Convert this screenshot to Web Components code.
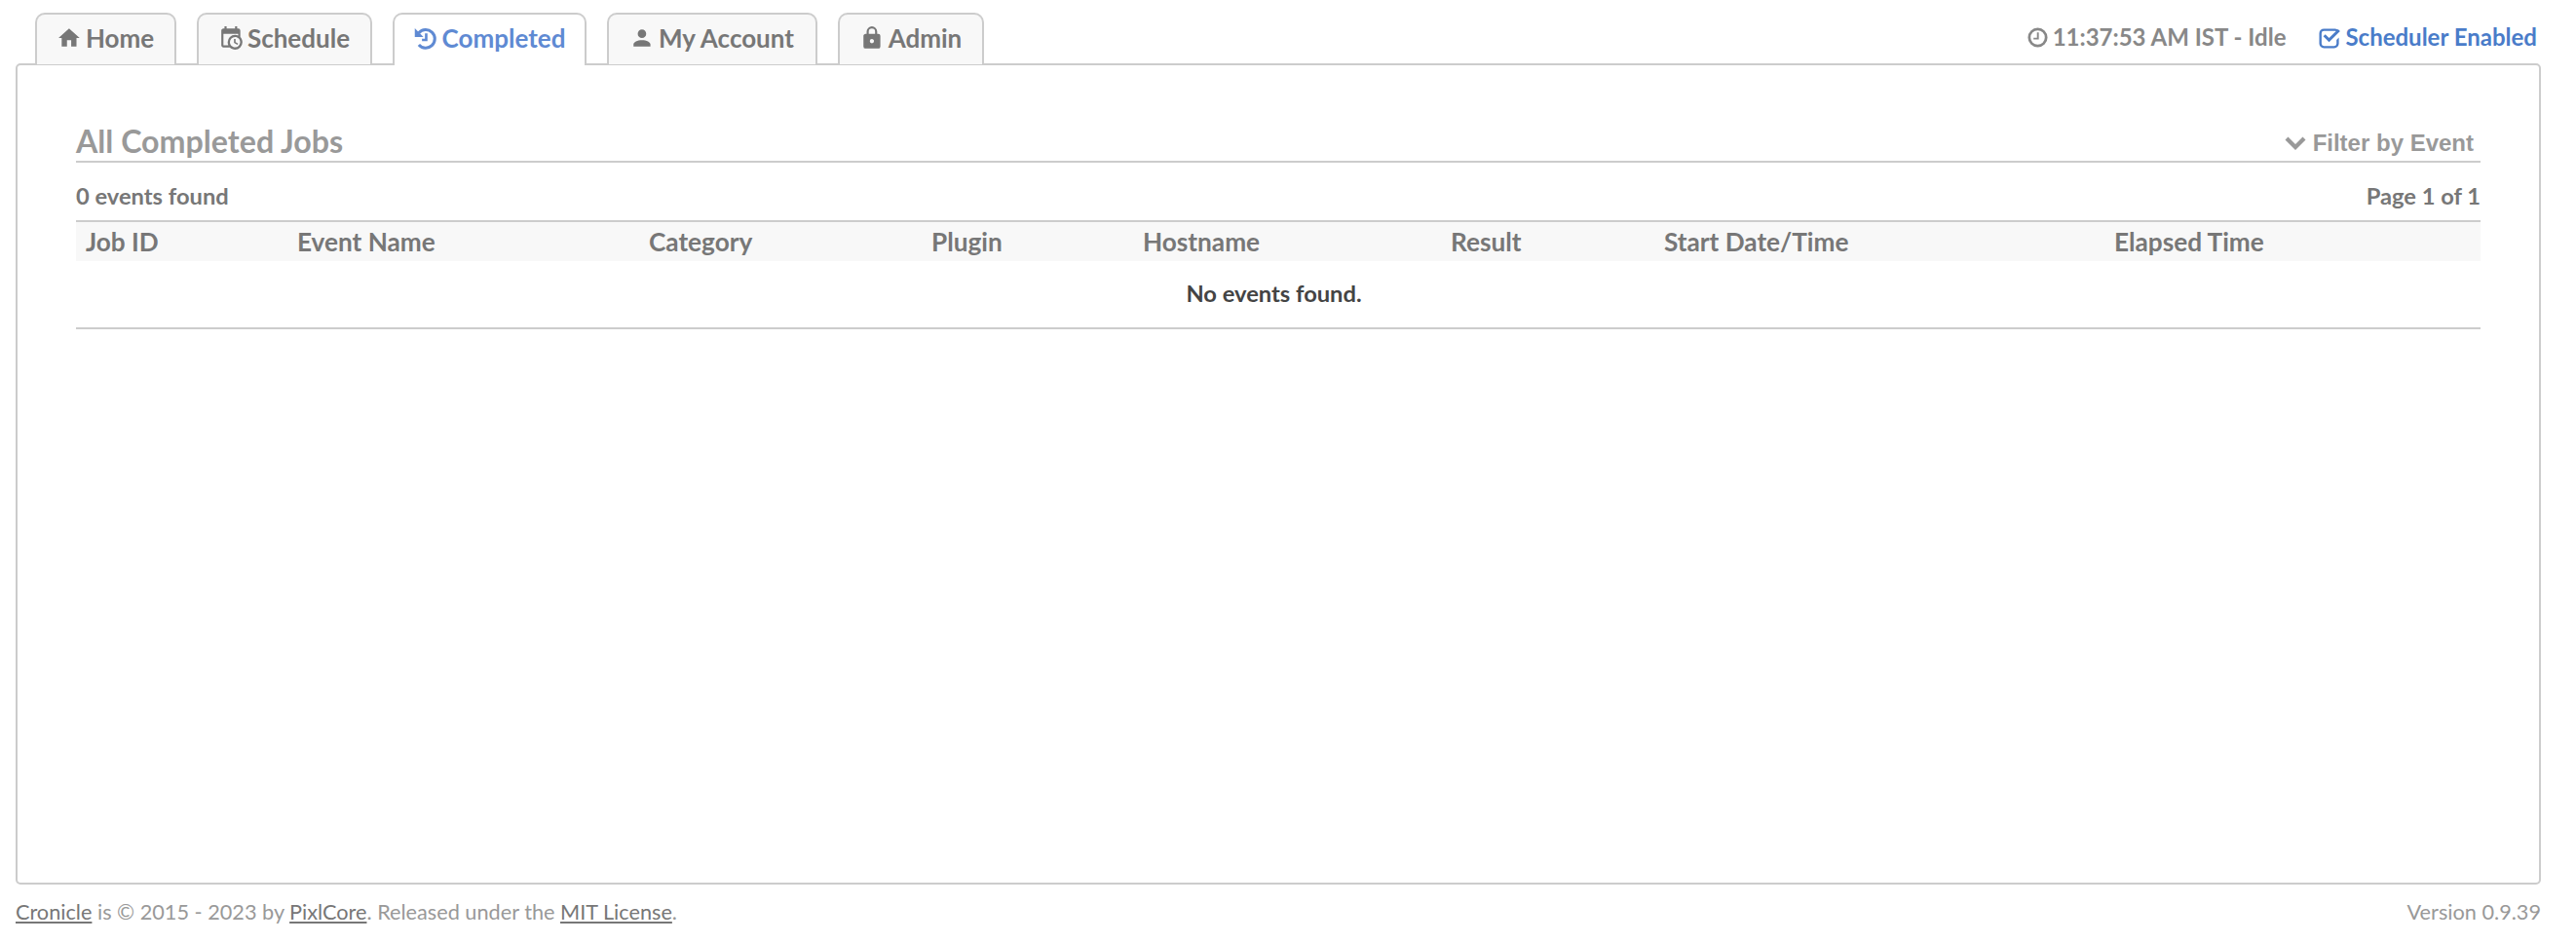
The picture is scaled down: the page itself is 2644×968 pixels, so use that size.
<!DOCTYPE html>
<html><head><meta charset="utf-8"><style>
html,body{margin:0;padding:0;background:#fff}
body{font-family:Lato,"Liberation Sans",sans-serif}
</style></head><body>
<app-shell>
  <tab-bar slot="tabs">
    <nav-tab icon="home" style="--w:145px">Home</nav-tab>
    <nav-tab icon="cal" style="--w:180px">Schedule</nav-tab>
    <nav-tab icon="hist" active style="--w:199px">Completed</nav-tab>
    <nav-tab icon="user" style="--w:216px">My Account</nav-tab>
    <nav-tab icon="lock" style="--w:150px">Admin</nav-tab>
    <status-bar></status-bar>
  </tab-bar>
  <jobs-panel></jobs-panel>
  <app-footer></app-footer>
</app-shell>
<script>
const ICONS={
home:'<svg viewBox="1 0 24 24"><path d="M10,20V14H14V20H19V12H22L12,3L2,12H5V20H10Z"/></svg>',
cal:'<svg viewBox="1 0 24 24"><path d="M15,13H16.5V15.82L18.94,17.23L18.19,18.53L15,16.69V13M19,8H5V19H9.67C9.24,18.09 9,17.07 9,16A7,7 0 0,1 16,9C17.07,9 18.09,9.24 19,9.67V8M5,21C3.89,21 3,20.1 3,19V5C3,3.89 3.89,3 5,3H6V1H8V3H16V1H18V3H19A2,2 0 0,1 21,5V11.1C22.24,12.36 23,14.09 23,16A7,7 0 0,1 16,23C14.09,23 12.36,22.24 11.1,21H5M16,11.15A4.85,4.85 0 0,0 11.15,16C11.15,18.68 13.32,20.85 16,20.85A4.85,4.85 0 0,0 20.85,16C20.85,13.32 18.68,11.15 16,11.15Z"/></svg>',
hist:'<svg viewBox="1.5 0 24 24"><path style="fill:none;stroke:currentColor;stroke-width:2.8" d="M6,7.2A8.6,8.6 0 1,1 6,18.4"/><path style="fill:none;stroke:currentColor;stroke-width:2.4" d="M13,7.5V13.8H9"/><path d="M2.2,2.8V11H10.4Z"/></svg>',
user:'<svg viewBox="1 0 24 24"><path d="M12,4A4,4 0 0,1 16,8A4,4 0 0,1 12,12A4,4 0 0,1 8,8A4,4 0 0,1 12,4M12,14C16.42,14 20,15.79 20,18V20H4V18C4,15.79 7.58,14 12,14Z"/></svg>',
lock:'<svg viewBox="1 0 24 24"><path d="M12,17A2,2 0 0,0 14,15C14,13.89 13.1,13 12,13A2,2 0 0,0 10,15A2,2 0 0,0 12,17M18,8A2,2 0 0,1 20,10V20A2,2 0 0,1 18,22H6A2,2 0 0,1 4,20V10C4,8.89 4.9,8 6,8H7V6A5,5 0 0,1 12,1A5,5 0 0,1 17,6V8H18M12,3A3,3 0 0,0 9,6V8H15V6A3,3 0 0,0 12,3Z"/></svg>',
clock:'<svg viewBox="0 0 24 24"><path d="M12,1.5A10.5,10.5 0 1,0 22.5,12A10.5,10.5 0 0,0 12,1.5M12,19.6A7.6,7.6 0 1,1 19.6,12A7.6,7.6 0 0,1 12,19.6M13.2,6.5H11.2V12.2H7.5V14.2H13.2Z"/></svg>',
check:'<svg viewBox="0 0 24 24"><path d="M5.5,2.5H17.5A3.5,3.5 0 0,1 20.8,4.8L18.9,6.7C18.8,5.6 18.2,5 17.5,5H5.5A2.5,2.5 0 0,0 3,7.5V18.5A2.5,2.5 0 0,0 5.5,21H16.5A2.5,2.5 0 0,0 19,18.5V14.5L21.5,12V18.5A5,5 0 0,1 16.5,23.5H5.5A5,5 0 0,1 .5,18.5V7.5A5,5 0 0,1 5.5,2.5ZM4.8,10.8L7,8.6L11,12.6L20.6,3L22.8,5.2L11,17Z"/></svg>',
chev:'<svg viewBox="0 0 24 24"><path d="M1.5,8.5L4.5,5.5L12,13L19.5,5.5L22.5,8.5L12,19Z"/></svg>'
};
function def(name,html,init){customElements.define(name,class extends HTMLElement{
  constructor(){super();this.attachShadow({mode:'open'}).innerHTML=html;}
  connectedCallback(){init&&init.call(this)}
});}
def('app-shell',`<style>:host{display:flex;flex-direction:column;height:968px;box-sizing:border-box;padding:13px 36px 0 16px}</style><slot name="tabs"></slot><slot></slot>`);
def('tab-bar',`<style>
:host{display:flex;height:52px;padding:0 4px 0 20px;gap:21px;align-items:flex-start;position:relative;z-index:1}
</style><slot></slot>`);
def('nav-tab',`<style>
:host{display:flex;box-sizing:border-box;width:var(--w);height:53px;padding-bottom:4px;border:2px solid #ccc;border-bottom:none;border-radius:10px 10px 0 0;background:#f8f8f8;color:#777;font:700 26px/46px Lato,sans-serif;align-items:center;justify-content:center;gap:3px;white-space:nowrap;margin-bottom:-1px}
:host([active]){background:#fff;color:#5f8ad3;height:54px}
#i{display:flex;width:26px;height:26px}#i svg{width:100%;height:100%;fill:currentColor}
</style><span id="i"></span><slot></slot>`,function(){this.shadowRoot.getElementById('i').innerHTML=ICONS[this.getAttribute('icon')]});
def('status-bar',`<style>
:host{display:flex;gap:34px;font:700 24px/30px Lato,sans-serif;color:#888;align-items:center;white-space:nowrap;margin-left:auto;align-self:center;margin-top:-2px}
span{display:flex;align-items:center;gap:4px}
svg{width:23px;height:23px;fill:currentColor}
.b{color:#4a7cc9}
</style><span id="a"></span><span id="b" class="b"></span>`,function(){
 this.shadowRoot.getElementById('a').innerHTML=ICONS.clock+'11:37:53 AM IST - Idle';
 this.shadowRoot.getElementById('b').innerHTML=ICONS.check+'Scheduler Enabled';});
def('jobs-panel',`<style>
:host{display:block;box-sizing:border-box;height:843px;border:2px solid #ccc;border-radius:5px;padding:52px 60px 0 60px;background:#fff;color:#777}
.head{display:flex;justify-content:space-between;align-items:flex-end;height:46px;border-bottom:2px solid #ccc;box-sizing:content-box}
h1{margin:0;height:46px;font:700 32.2px/52px Lato,sans-serif;color:#999}
.filter{display:flex;align-items:center;gap:6px;font:700 24px/30px "Liberation Sans",sans-serif;color:#999;padding:0 7px 3px 0}
.filter svg{width:24px;height:24px;fill:currentColor}
.meta{display:flex;justify-content:space-between;font:700 23.7px/30px Lato,sans-serif;height:59px;padding-top:8px;align-items:center;box-sizing:border-box}
.row{display:grid;grid-template-columns:217px 361px 290px 217px 316px 219px 462px 1fr;background:#f8f8f8;border-top:2px solid #ccc;height:40px;padding-left:10px;font:700 26.2px/40px Lato,sans-serif;box-sizing:content-box}
.empty{text-align:center;font:700 23.7px/66px Lato,sans-serif;color:#444;border-bottom:2px solid #ccc;height:68px;padding-right:9px}
</style>
<div class="head"><h1>All Completed Jobs</h1><div class="filter" id="f">Filter by Event</div></div>
<div class="meta"><span>0 events found</span><span>Page 1 of 1</span></div>
<div class="row"><span>Job ID</span><span>Event Name</span><span>Category</span><span>Plugin</span><span>Hostname</span><span>Result</span><span>Start Date/Time</span><span>Elapsed Time</span></div>
<div class="empty">No events found.</div>`,function(){this.shadowRoot.getElementById('f').insertAdjacentHTML('afterbegin',ICONS.chev)});
def('app-footer',`<style>
:host{display:flex;justify-content:space-between;font:400 21.7px/30px Lato,sans-serif;color:#999;padding-top:13px}
a{color:#777;text-decoration:underline}
</style><span><a>Cronicle</a> is © 2015 - 2023 by <a>PixlCore</a>. Released under the <a>MIT License</a>.</span><span>Version 0.9.39</span>`);
</script>
</body></html>
